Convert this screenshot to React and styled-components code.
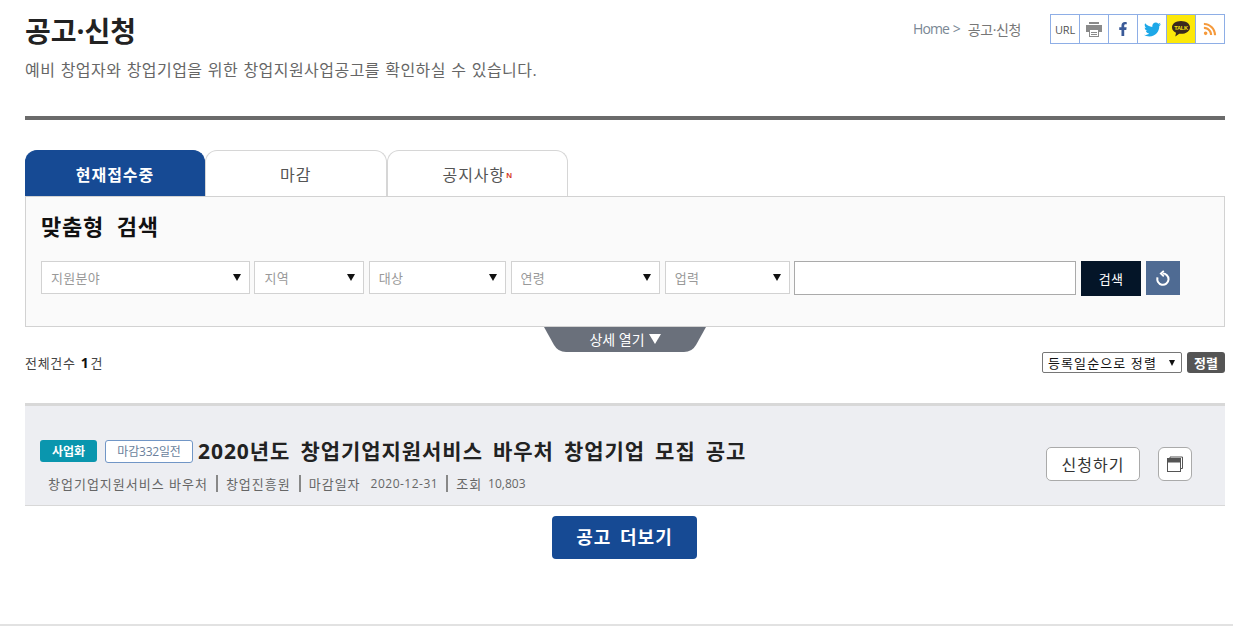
import React from "react";
import styled, { createGlobalStyle } from "styled-components";
import { FaFacebookF, FaTwitter, FaRss } from "react-icons/fa";

const Global = createGlobalStyle`
  html, body { margin: 0; padding: 0; background: #fff; }
  body { font-family: "Open Sans", "Noto Sans CJK KR", sans-serif; color: #222; }
  * { box-sizing: border-box; }
`;

const Page = styled.div`
  width: 1233px;
  height: 626px;
  padding: 0 8px 0 25px;
  overflow: hidden;
  border-bottom: 2px solid #e2e2e2;
`;
const Header = styled.header`
  height: 120px;
  border-bottom: 4px solid #6b6b6b;
  display: flex;
  justify-content: space-between;
  align-items: flex-start;
`;
const Heading = styled.div`
  padding-top: 11px;
`;
const Title = styled.h1`
  margin: 0;
  font-size: 28px;
  line-height: 40px;
  font-weight: 700;
  color: #222;
`;
const Subtitle = styled.p`
  margin: 8px 0 0;
  font-size: 16px;
  line-height: 22px;
  color: #666;
  letter-spacing: 0.45px;
  word-spacing: 0.7px;
`;
const HeadRight = styled.div`
  display: flex;
  align-items: center;
  padding-top: 14px;
`;
const Crumbs = styled.div`
  font-size: 14px;
  letter-spacing: -0.4px;
  color: #777;
  margin-right: 29px;
  display: flex;
  gap: 8px;
`;
const CrumbHome = styled.span`
  color: #7a8794;
  letter-spacing: -0.9px;
  word-spacing: 1px;
`;
const ShareBar = styled.div`
  display: flex;
  height: 30px;
  border: 1px solid #8eaee6;
  background: #fff;
`;
const ShareItem = styled.div`
  width: ${(p) => (p.$first ? 28 : 29)}px;
  display: flex;
  align-items: center;
  justify-content: center;
  font-size: 11px;
  border-left: ${(p) => (p.$first ? "none" : "1px solid #8eaee6")};
  background: ${(p) => p.$bg || "transparent"};
  color: #555;
  font-family: "Open Sans", sans-serif;
  letter-spacing: -0.2px;
`;
const Tabs = styled.div`
  display: flex;
  margin-top: 30px;
  height: 46px;
`;
const Tab = styled.div`
  width: ${(p) => (p.$active ? 180 : 181.5)}px;
  height: 46px;
  border: 1px solid ${(p) => (p.$active ? "#164a94" : "#d6d6d6")};
  border-bottom: none;
  border-radius: 12px 12px 0 0;
  background: ${(p) => (p.$active ? "#164a94" : "#fff")};
  color: ${(p) => (p.$active ? "#fff" : "#555")};
  font-weight: ${(p) => (p.$active ? 700 : 400)};
  font-size: 16px;
  letter-spacing: 1px;
  display: flex;
  align-items: center;
  justify-content: center;
`;
const NewMark = styled.span`
  font-size: 8px;
  font-weight: 900;
  color: #d43a2a;
  margin-left: 1px;
  margin-top: 3px;
  letter-spacing: 0;
  font-family: "Liberation Sans", sans-serif;
`;
const Panel = styled.section`
  height: 131px;
  border: 1px solid #d2d2d2;
  background: #fafafa;
  padding: 13px 15px 0;
`;
const PanelTitle = styled.h2`
  margin: 0;
  font-size: 22px;
  line-height: 33px;
  font-weight: 700;
  color: #111;
  letter-spacing: 0.8px;
  word-spacing: 6px;
`;
const Filters = styled.div`
  display: flex;
  gap: 4.4px;
  margin-top: 18px;
  align-items: flex-start;
`;
const SelectWrap = styled.div`
  position: relative;
  flex: none;
  width: ${(p) => p.$w}px;
  height: ${(p) => p.$h}px;
  &::after {
    content: "";
    position: absolute;
    top: 50%;
    right: ${(p) => p.$arrowRight}px;
    margin-top: -${(p) => p.$arrow / 2}px;
    border-top: ${(p) => p.$arrow}px solid #111;
    border-left: ${(p) => p.$arrow / 2 + 0.5}px solid transparent;
    border-right: ${(p) => p.$arrow / 2 + 0.5}px solid transparent;
    pointer-events: none;
  }
`;
const FilterSelect = styled.select`
  appearance: none;
  display: block;
  width: 100%;
  height: 100%;
  border: 1px solid #d2d2d2;
  background: #fff;
  color: #999;
  font-family: inherit;
  font-size: 13px;
  letter-spacing: 0.3px;
  padding: 0 9px;
  border-radius: 0;
  outline: none;
`;
const SearchInput = styled.input`
  width: 281.8px;
  height: 34px;
  border: 1px solid #aaa;
  background: #fff;
  outline: none;
  flex: none;
`;
const SearchBtn = styled.button`
  width: 60.8px;
  height: 35px;
  border: none;
  background: #041528;
  color: #fff;
  font-family: inherit;
  font-size: 13px;
  letter-spacing: 0.3px;
  padding: 0;
  flex: none;
`;
const ResetBtn = styled.button`
  width: 34px;
  height: 34px;
  border: none;
  background: #4f6b93;
  padding: 0;
  display: flex;
  align-items: center;
  justify-content: center;
  flex: none;
`;
const ToggleWrap = styled.div`
  display: flex;
  justify-content: center;
  height: 25px;
`;
const Toggle = styled.div`
  width: 162px;
  height: 25px;
  display: flex;
  align-items: center;
  justify-content: center;
  position: relative;
  color: #fff;
  font-size: 14px;
  padding-bottom: 2px;
`;
const ToggleShape = styled.svg`
  position: absolute;
  inset: 0;
`;
const ToggleLabel = styled.span`
  position: relative;
  display: flex;
  align-items: center;
  gap: 4px;
`;
const SummaryRow = styled.div`
  display: flex;
  justify-content: space-between;
  align-items: center;
  height: 21px;
`;
const Count = styled.div`
  font-size: 13px;
  color: #444;
  letter-spacing: 0.7px;
`;
const CountNum = styled.b`
  color: #111;
  font-size: 14px;
  margin: 0 1px;
`;
const SortBox = styled.div`
  display: flex;
  align-items: center;
  gap: 5px;
`;
const SortSelect = styled.select`
  appearance: none;
  display: block;
  width: 100%;
  height: 100%;
  border: 1px solid #767676;
  border-radius: 2px;
  background: #fff;
  font-family: inherit;
  font-size: 13px;
  color: #111;
  padding: 0 0 0 5px;
  letter-spacing: 1.1px;
`;
const SortBtn = styled.button`
  width: 38px;
  height: 21px;
  border: none;
  border-radius: 3px;
  background: #555;
  color: #fff;
  font-family: inherit;
  font-size: 13px;
  font-weight: 700;
  padding: 0;
`;
const Card = styled.article`
  margin-top: 30px;
  height: 103px;
  border-top: 3px solid #d8d8d8;
  border-bottom: 1px solid #d8d8d8;
  background: #edeef2;
  padding: 30px 33px 0 15px;
  display: flex;
  justify-content: space-between;
`;
const CardMain = styled.div`
  display: flex;
  flex-direction: column;
`;
const TitleRow = styled.div`
  display: flex;
  align-items: center;
  height: 30px;
`;
const TypeBadge = styled.span`
  width: 57px;
  height: 22px;
  border-radius: 3px;
  background: #0a96ae;
  color: #fff;
  font-size: 12px;
  font-weight: 700;
  display: flex;
  align-items: center;
  justify-content: center;
`;
const DdayBadge = styled.span`
  width: 88px;
  height: 23px;
  margin-left: 8px;
  border: 1px solid #7196c6;
  border-radius: 3px;
  background: #fff;
  color: #6a7f9c;
  font-size: 12px;
  letter-spacing: -0.2px;
  display: flex;
  align-items: center;
  justify-content: center;
`;
const JobTitle = styled.h3`
  margin: 0 0 0 5px;
  font-size: 21px;
  line-height: 30px;
  font-weight: 700;
  color: #222;
  letter-spacing: 0.95px;
  word-spacing: 3.7px;
`;
const Meta = styled.div`
  display: flex;
  align-items: center;
  margin: 8px 0 0 8px;
  height: 18px;
  font-size: 13px;
  letter-spacing: 1px;
  color: #666;
`;
const MetaSep = styled.i`
  width: 2px;
  height: 17px;
  background: #888;
  margin: 0 8px;
`;
const MetaDate = styled.span`
  margin-left: 10px;
  font-size: 12px;
  letter-spacing: 0.5px;
`;
const MetaViews = styled.span`
  margin-left: 6px;
  font-size: 12px;
  letter-spacing: 0;
`;
const Actions = styled.div`
  display: flex;
  align-items: center;
  gap: 18px;
  height: 34px;
  margin-top: 11px;
`;
const ApplyBtn = styled.button`
  width: 94px;
  height: 34px;
  border: 1px solid #aaa;
  border-radius: 5px;
  background: #fff;
  color: #333;
  font-family: inherit;
  font-size: 16px;
  padding: 0;
  letter-spacing: 1px;
`;
const IconBtn = styled.button`
  width: 34px;
  height: 34px;
  border: 1px solid #aaa;
  border-radius: 6px;
  background: #fff;
  padding: 0;
  display: flex;
  align-items: center;
  justify-content: center;
`;
const More = styled.div`
  display: flex;
  justify-content: center;
  margin-top: 10px;
  padding-right: 1px;
`;
const MoreBtn = styled.button`
  width: 145px;
  height: 43px;
  border: none;
  border-radius: 4px;
  background: #164a94;
  color: #fff;
  font-family: inherit;
  font-size: 18px;
  font-weight: 700;
  line-height: 40px;
  padding: 0 0 2px;
  letter-spacing: 1px;
  word-spacing: 3px;
`;

const filters = [
  ["지원분야", 209],
  ["지역", 110],
  ["대상", 137.4],
  ["연령", 149.8],
  ["업력", 125.2],
];

export default function App() {
  return (
    <Page>
      <Global />
      <Header>
        <Heading>
          <Title>공고·신청</Title>
          <Subtitle>예비 창업자와 창업기업을 위한 창업지원사업공고를 확인하실 수 있습니다.</Subtitle>
        </Heading>
        <HeadRight>
          <Crumbs>
            <CrumbHome>Home &gt;</CrumbHome>
            <span>공고·신청</span>
          </Crumbs>
          <ShareBar>
            <ShareItem $first>URL</ShareItem>
            <ShareItem>
              <svg width="16" height="15" viewBox="0 0 16 15" fill="#8a8a8a">
                <rect x="3" y="0" width="10" height="2" />
                <rect x="0" y="3" width="16" height="7" />
                <rect x="3.5" y="7.5" width="9" height="7" fill="#fff" stroke="#8a8a8a" />
                <rect x="5" y="10" width="6" height="1" />
                <rect x="5" y="12" width="6" height="1" />
              </svg>
            </ShareItem>
            <ShareItem><FaFacebookF size={14} color="#3a5a98" /></ShareItem>
            <ShareItem><FaTwitter size={17} color="#1da8e8" /></ShareItem>
            <ShareItem $bg="#fce80a">
              <svg width="20" height="18" viewBox="0 0 20 18">
                <path d="M10 1C4.8 1 1 3.8 1 7.4c0 2.3 1.6 4.2 4 5.4L4.3 16.4l3.9-2.7c.6.1 1.2.1 1.8.1 5.2 0 9-2.8 9-6.4S15.2 1 10 1z" fill="#3b2a1e" />
                <text x="10" y="9.6" fontSize="5.6" fontWeight="700" textAnchor="middle" fill="#fce80a" fontFamily="Liberation Sans">TALK</text>
              </svg>
            </ShareItem>
            <ShareItem><FaRss size={14} color="#f59a3c" /></ShareItem>
          </ShareBar>
        </HeadRight>
      </Header>
      <Tabs>
        <Tab $active>현재접수중</Tab>
        <Tab>마감</Tab>
        <Tab>공지사항<NewMark>N</NewMark></Tab>
      </Tabs>
      <Panel>
        <PanelTitle>맞춤형 검색</PanelTitle>
        <Filters>
          {filters.map(([label, w]) => (
            <SelectWrap key={label} $w={w} $h={33} $arrow={7} $arrowRight={9}>
              <FilterSelect defaultValue={label}>
                <option>{label}</option>
              </FilterSelect>
            </SelectWrap>
          ))}
          <SearchInput />
          <SearchBtn>검색</SearchBtn>
          <ResetBtn aria-label="초기화">
            <svg width="16" height="16" viewBox="0 0 16 16" fill="none" stroke="#fff" strokeWidth="2">
              <path d="M7.6 3.6A5.6 5.6 0 1 1 2.6 7.4" />
              <path d="M8.8 0.8 5.8 3.6 8.8 6.4" strokeWidth="1.8" />
            </svg>
          </ResetBtn>
        </Filters>
      </Panel>
      <ToggleWrap>
        <Toggle>
          <ToggleShape width="162" height="25" viewBox="0 0 162 25">
            <path d="M0 0H162L152 18Q148 25 140 25H22Q14 25 10 18Z" fill="#6a707b" />
          </ToggleShape>
          <ToggleLabel>
            상세 열기
            <svg width="12" height="10" viewBox="0 0 12 10"><path d="M0 0H12L6 10Z" fill="#fff" /></svg>
          </ToggleLabel>
        </Toggle>
      </ToggleWrap>
      <SummaryRow>
        <Count>전체건수 <CountNum>1</CountNum>건</Count>
        <SortBox>
          <SelectWrap $w={140} $h={21} $arrow={6} $arrowRight={7}>
            <SortSelect defaultValue="a"><option value="a">등록일순으로 정렬</option></SortSelect>
          </SelectWrap>
          <SortBtn>정렬</SortBtn>
        </SortBox>
      </SummaryRow>
      <Card>
        <CardMain>
          <TitleRow>
            <TypeBadge>사업화</TypeBadge>
            <DdayBadge>마감332일전</DdayBadge>
            <JobTitle>2020년도 창업기업지원서비스 바우처 창업기업 모집 공고</JobTitle>
          </TitleRow>
          <Meta>
            <span>창업기업지원서비스 바우처</span>
            <MetaSep />
            <span>창업진흥원</span>
            <MetaSep />
            <span>마감일자</span>
            <MetaDate>2020-12-31</MetaDate>
            <MetaSep />
            <span>조회</span>
            <MetaViews>10,803</MetaViews>
          </Meta>
        </CardMain>
        <Actions>
          <ApplyBtn>신청하기</ApplyBtn>
          <IconBtn aria-label="새창">
            <svg width="16" height="16" viewBox="0 0 16 16" fill="none">
              <path d="M3 2.5V1H15.5V12.5H13" stroke="#555" strokeWidth="1" />
              <rect x="0.5" y="2.5" width="13" height="13" fill="#fff" stroke="#555" />
              <rect x="0.5" y="2.5" width="13" height="4" fill="#555" />
            </svg>
          </IconBtn>
        </Actions>
      </Card>
      <More>
        <MoreBtn>공고 더보기</MoreBtn>
      </More>
    </Page>
  );
}
